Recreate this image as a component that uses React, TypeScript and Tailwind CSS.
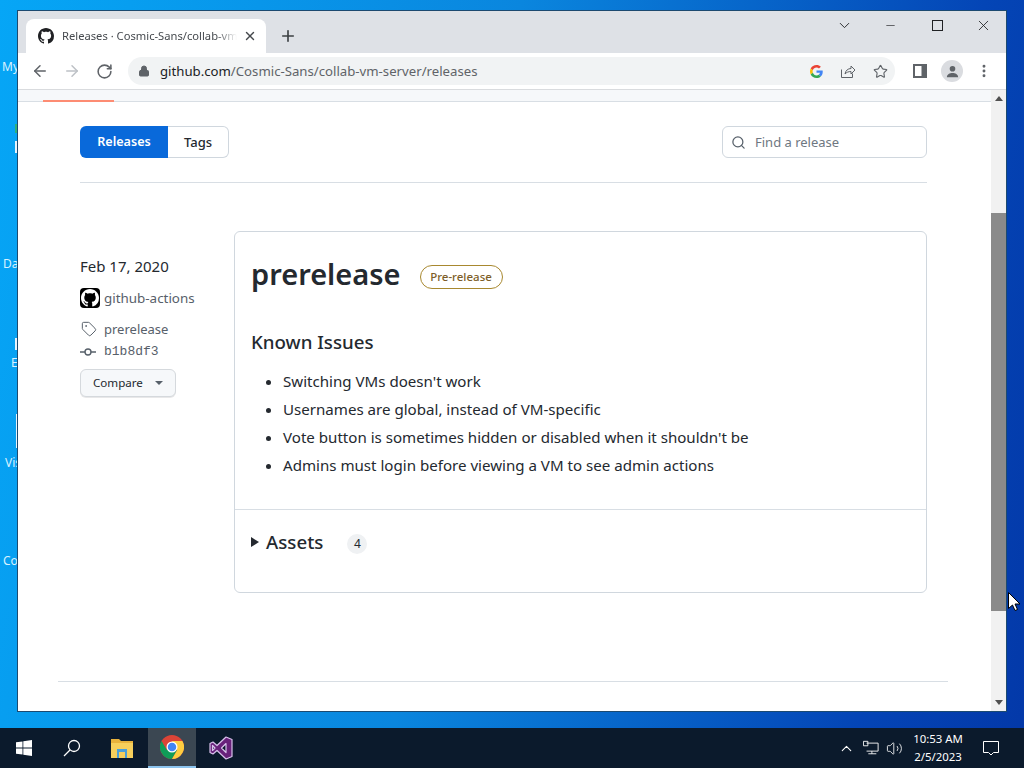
import { ArrowLeft, ArrowRight, ChevronDown, ChevronUp, Lock, MoreVertical, Plus, RotateCw, Search, Star, Tag, Volume2, X, Minus } from 'lucide-react';

const githubMark =
  'M8 0C3.58 0 0 3.58 0 8c0 3.54 2.29 6.53 5.47 7.59.4.07.55-.17.55-.38 0-.19-.01-.82-.01-1.49-2.01.37-2.53-.49-2.69-.94-.09-.23-.48-.94-.82-1.13-.28-.15-.68-.52-.01-.53.63-.01 1.08.58 1.23.82.72 1.21 1.87.87 2.33.66.07-.52.28-.87.51-1.07-1.78-.2-3.64-.89-3.64-3.95 0-.87.31-1.59.82-2.15-.08-.2-.36-1.02.08-2.12 0 0 .67-.21 2.2.82.64-.18 1.32-.27 2-.27.68 0 1.36.09 2 .27 1.53-1.04 2.2-.82 2.2-.82.44 1.1.16 1.92.08 2.12.51.56.82 1.27.82 2.15 0 3.07-1.87 3.75-3.65 3.95.29.25.54.73.54 1.48 0 1.07-.01 1.93-.01 2.2 0 .21.15.46.55.38A8.013 8.013 0 0016 8c0-4.42-3.58-8-8-8z';

function TabBar() {
  return (
    <div className="flex h-[42px] bg-[#dee1e6] text-[#202124]">
      <div className="mt-[8px] ml-[8px] flex h-[34px] w-[240px] items-center rounded-t-[8px] bg-white pl-[12px]">
        <svg viewBox="0 0 16 16" className="h-[16px] w-[16px] shrink-0" fill="#202124">
          <path d={githubMark} />
        </svg>
        <span className="ml-[8px] w-[175px] overflow-hidden text-[11.2px] whitespace-nowrap text-[#45494e] [mask-image:linear-gradient(to_right,black_88%,transparent_100%)]">
          Releases · Cosmic-Sans/collab-vm-server
        </span>
        <X size={14} strokeWidth={2.4} className="ml-[6px] shrink-0 text-[#45484c]" />
      </div>
      <Plus size={18} strokeWidth={2.2} className="mt-[16px] ml-[13px] text-[#3c4043]" />
      <div className="ml-auto flex items-start text-[#202124]">
        <ChevronDown size={17} strokeWidth={1.3} className="mt-[6px] mr-[31px]" />
        <Minus size={13} strokeWidth={1.2} className="mt-[8px] mr-[35px]" />
        <div className="mt-[9px] mr-[32px] h-[11px] w-[11px] border border-[#202124]" />
        <X size={17} strokeWidth={1.2} className="mt-[6px] mr-[14px]" />
      </div>
    </div>
  );
}

function Toolbar() {
  return (
    <div className="flex h-[37px] items-center border-b border-[#d9dbde] bg-white pl-[13px]">
      <ArrowLeft size={18} strokeWidth={2} className="text-[#5f6368]" />
      <ArrowRight size={18} strokeWidth={2} className="ml-[14px] text-[#bdc1c6]" />
      <RotateCw size={17} strokeWidth={2.2} className="ml-[15px] text-[#5f6368]" />
      <div className="ml-[15px] flex h-[28px] w-[767px] items-center rounded-full bg-[#f1f3f4] pr-[7px] pl-[10px]">
        <Lock size={12} fill="#5f6368" className="text-[#5f6368]" />
        <span className="mt-[1px] ml-[10px] text-[13.2px] text-[#5f6368]">
          <span className="text-[#202124]">github.com</span>/Cosmic-Sans/collab-vm-server/releases
        </span>
        <svg viewBox="0 0 48 48" className="ml-auto h-[13px] w-[13px]">
          <path fill="#ea4335" d="M24 9.5c3.5 0 6.7 1.2 9.2 3.6l6.9-6.9C36 2.4 30.5 0 24 0 14.6 0 6.5 5.4 2.6 13.2l8 6.2C12.5 13.6 17.8 9.5 24 9.5z" />
          <path fill="#4285f4" d="M47 24.5c0-1.6-.1-3.1-.4-4.5H24v9h12.9c-.6 3-2.2 5.5-4.7 7.2l7.700 6C44.4 38 47 31.8 47 24.5z" />
          <path fill="#fbbc05" d="M10.5 28.6c-.5-1.4-.8-3-.8-4.6s.3-3.2.8-4.6l-8-6.2C.9 16.4 0 20.1 0 24s.9 7.6 2.6 10.8l7.9-6.2z" />
          <path fill="#34a853" d="M24 48c6.5 0 11.9-2.1 15.9-5.8l-7.7-6c-2.2 1.4-4.9 2.3-8.2 2.3-6.2 0-11.5-4.2-13.4-9.8l-8 6.2C6.5 42.6 14.6 48 24 48z" />
        </svg>
        <svg viewBox="0 0 16 16" className="ml-[17px] h-[16px] w-[16px]" fill="none" stroke="#5f6368" strokeWidth="1">
          <path d="M1.5 6.5v8h11v-4" />
          <path d="M5 11c.5-3.5 3-5.5 6-5.5V3l4 4-4 4V8.5c-2.5 0-4.5.8-6 2.5z" />
        </svg>
        <Star size={15} strokeWidth={1.8} className="ml-[17px] text-[#5f6368]" />
      </div>
      <svg viewBox="0 0 14 14" className="ml-[18px] h-[14px] w-[14px]">
        <path fill="#5f6368" fillRule="evenodd" d="M0 0h14v14H0zM2 2v10h6.5V2z" />
      </svg>
      <div className="ml-[14px] flex h-[22px] w-[22px] items-center justify-center rounded-full bg-[#dadce0]">
        <svg viewBox="0 0 16 16" className="h-[15px] w-[15px]" fill="#5f6368">
          <circle cx="8" cy="5" r="3" />
          <path d="M2 14c0-3 3-4.5 6-4.5s6 1.5 6 4.5z" />
        </svg>
      </div>
      <MoreVertical size={16} strokeWidth={2.4} className="ml-[13px] text-[#5f6368]" />
    </div>
  );
}

function Sidebar() {
  return (
    <div className="w-[154px] shrink-0 pt-[24px]">
      <div className="text-[15px] leading-[22px] text-[#24292f]">Feb 17, 2020</div>
      <div className="mt-[11px] flex items-center text-[13.4px] text-[#57606a]">
        <div className="flex h-[20px] w-[20px] items-center justify-center rounded-[4px] bg-black">
          <svg viewBox="0 0 16 16" className="h-[18px] w-[18px]" fill="white">
            <path d={githubMark} />
          </svg>
        </div>
        <span className="ml-[4px]">github-actions</span>
      </div>
      <div className="mt-[11px] flex items-center text-[13px] leading-[20px] text-[#57606a]">
        <Tag size={16} strokeWidth={1.5} className="ml-[1px]" />
        <span className="ml-[7px]">prerelease</span>
      </div>
      <div className="mt-[3px] flex items-center text-[#57606a]">
        <svg viewBox="0 0 16 16" className="h-[16px] w-[16px]" fill="none" stroke="currentColor" strokeWidth="1.4">
          <circle cx="8" cy="8" r="3" />
          <path d="M0 8h5M11 8h5" />
        </svg>
        <span className="ml-[8px] font-['Liberation_Mono',monospace] text-[13px] leading-[20px]">b1b8df3</span>
      </div>
      <button className="mt-[7px] flex h-[28px] w-[96px] items-center rounded-[6px] border border-[#d5d9dd] bg-[#f6f8fa] pl-[12px] text-[11.6px] text-[#24292f] shadow-[0_1px_0_rgba(27,31,36,0.1)]">
        Compare
        <span className="ml-[12px] h-0 w-0 border-x-[4px] border-t-[4px] border-x-transparent border-t-[#57606a]" />
      </button>
    </div>
  );
}

function ReleaseCard() {
  const issues = [
    "Switching VMs doesn't work",
    'Usernames are global, instead of VM-specific',
    "Vote button is sometimes hidden or disabled when it shouldn't be",
    'Admins must login before viewing a VM to see admin actions',
  ];
  return (
    <div className="h-[362px] w-[693px] rounded-[6px] border border-[#d0d7de] bg-white">
      <div className="h-[278px] border-b border-[#d8dee4] px-[16px] pt-[18px]">
        <div className="flex items-center">
          <h1 className="text-[29px] leading-[48px] font-semibold text-[#24292f]">prerelease</h1>
          <span className="mt-[5px] ml-[19px] flex h-[24px] w-[83px] items-center justify-center rounded-full border border-[#a8882f] text-[11.5px] font-medium text-[#7d5e28]">
            Pre-release
          </span>
        </div>
        <h2 className="mt-[29px] text-[18.7px] leading-[30px] font-medium text-[#24292f]">Known Issues</h2>
        <ul className="mt-[10px] list-disc pl-[32px] text-[15.1px] leading-[28px] text-[#24292f]">
          {issues.map((item) => (
            <li key={item}>{item}</li>
          ))}
        </ul>
      </div>
      <div className="flex items-center pt-[17px] pl-[16px]">
        <span className="h-0 w-0 border-y-[5px] border-l-[8px] border-y-transparent border-l-[#24292f]" />
        <span className="ml-[7px] text-[18.7px] leading-[30px] font-medium text-[#24292f]">Assets</span>
        <span className="mt-[3px] ml-[24px] flex h-[20px] w-[20px] items-center justify-center rounded-full bg-[#eff1f3] text-[12px] text-[#24292f]">
          4
        </span>
      </div>
    </div>
  );
}

function Page() {
  return (
    <div className="flex min-h-0 flex-1">
      <div className="flex-1 overflow-hidden bg-white">
        <div className="h-[12px] border-b border-[#d8dee4] bg-[#f6f8fa] pl-[25px]">
          <div className="h-[12px] w-[71px] border-b-2 border-[#fd8c73]" />
        </div>
        <div className="pr-[64px] pl-[62px]">
          <div className="flex items-center justify-between border-b border-[#d8dee4] pt-[24px] pb-[24px]">
            <div className="flex h-[32px]">
              <div className="flex w-[88px] items-center justify-center rounded-l-[6px] bg-[#0969da] pt-[1px] text-[12.6px] font-semibold text-white">
                Releases
              </div>
              <div className="flex w-[61px] items-center justify-center rounded-r-[6px] border border-l-0 border-[#d0d7de] pt-[1px] text-[13px] font-medium text-[#24292f]">
                Tags
              </div>
            </div>
            <div className="flex h-[32px] w-[205px] items-center rounded-[6px] border border-[#d0d7de] pl-[8px] text-[13px] text-[#6e7781]">
              <Search size={15} strokeWidth={2} className="text-[#57606a]" />
              <span className="mt-[1px] ml-[9px]">Find a release</span>
            </div>
          </div>
          <div className="mt-[48px] flex">
            <Sidebar />
            <ReleaseCard />
          </div>
        </div>
        <div className="mt-[88px] mr-[43px] ml-[40px] border-t border-[#d8dee4]" />
      </div>
      <div className="relative w-[15px] shrink-0 bg-[#f1f1f1]">
        <div className="mx-auto mt-[6px] h-0 w-0 border-x-[4px] border-b-[5px] border-x-transparent border-b-[#505050]" />
        <div className="absolute top-[123px] h-[398px] w-full bg-[#8a8a8a]" />
        <div className="absolute bottom-[6px] left-[3.5px] h-0 w-0 border-x-[4px] border-t-[5px] border-x-transparent border-t-[#505050]" />
      </div>
    </div>
  );
}

function Taskbar() {
  return (
    <div className="absolute right-0 bottom-0 left-0 flex h-[40px] items-center bg-[#0b1a2c] font-['Noto_Sans',sans-serif] text-white">
      <div className="flex w-[48px] justify-center">
        <svg viewBox="0 0 16 16" className="h-[16px] w-[16px]" fill="white">
          <path d="M0 2.3 6.5 1.4v6.2H0zM7.3 1.3 16 0v7.6H7.3zM0 8.4h6.5v6.2L0 13.7zM7.3 8.4H16V16l-8.7-1.3z" />
        </svg>
      </div>
      <div className="flex w-[48px] justify-center">
        <svg viewBox="0 0 18 18" className="h-[18px] w-[18px]" fill="none" stroke="white" strokeWidth="1.3">
          <circle cx="11" cy="7" r="5.5" />
          <path d="M7 11l-6 6" />
        </svg>
      </div>
      <div className="flex w-[52px] justify-center">
        <svg viewBox="0 0 22 20" className="h-[20px] w-[22px]">
          <path fill="#e8b23c" d="M0 1h8l2 2h12v3H0z" />
          <path fill="#f6cf5c" d="M0 5h22v15H0z" />
          <path fill="#4a9fd8" d="M6 11h10v9h-2v-6H8v6H6z" />
        </svg>
      </div>
      <div className="flex h-[40px] w-[48px] items-center justify-center border-b-2 border-[#8cc4ee] bg-[#3b4752]">
        <svg viewBox="0 0 48 48" className="h-[24px] w-[24px]">
          <circle cx="24" cy="24" r="24" fill="#db4437" />
          <path fill="#0f9d58" d="M3.2 12A24 24 0 0 0 24 48L34.4 30 13.6 30z" />
          <path fill="#ffcd40" d="M24 12h20.8A24 24 0 0 1 24 48L34.4 30z" />
          <circle cx="24" cy="24" r="11" fill="white" />
          <circle cx="24" cy="24" r="8.5" fill="#4285f4" />
        </svg>
      </div>
      <div className="ml-[1px] flex w-[48px] justify-center">
        <svg viewBox="0 0 24 24" className="h-[24px] w-[24px]">
          <path fill="#68217a" stroke="#d9c2ec" strokeWidth="1.2" strokeLinejoin="round" d="M17 1l6 2.5v17L17 23l-9-8.5-4 3.5-3-1.5v-9L4 6l4 3.5zM3.5 9.5v5L6 12zM17 7.5 12.5 12l4.5 4.5z" />
        </svg>
      </div>
      <div className="ml-auto flex items-center">
        <ChevronUp size={17} strokeWidth={1.5} />
        <svg viewBox="0 0 18 16" className="ml-[8px] h-[16px] w-[16px]" fill="none" stroke="white" strokeWidth="1">
          <path d="M4 2.5h13v9H4M10 11.5v3M6 14.5h9" />
          <path d="M.5.5h5v5h-5z" />
        </svg>
        <Volume2 size={17} strokeWidth={1.2} className="ml-[7px]" />
        <div className="ml-[7px] w-[56px] text-center text-[11.4px] leading-[18px]">
          <div>10:53 AM</div>
          <div>2/5/2023</div>
        </div>
        <svg viewBox="0 0 16 16" className="mr-[25px] ml-[17px] h-[16px] w-[16px]" fill="none" stroke="white" strokeWidth="1">
          <path d="M.5 1.5h15v11h-5L8 15l-2.5-2.5h-5z" />
        </svg>
      </div>
    </div>
  );
}

export default function App() {
  const labels = [
    { text: 'My', className: 'top-[58px] left-[2px]' },
    { text: 'Da', className: 'top-[255px] left-[3px]' },
    { text: 'E', className: 'top-[354px] left-[11px]' },
    { text: 'Vis', className: 'top-[454px] left-[5px]' },
    { text: 'Co', className: 'top-[552px] left-[3px]' },
  ];
  return (
    <div className="relative h-[768px] w-[1024px] overflow-hidden bg-[linear-gradient(100deg,#06a6f6_0%,#0a86de_45%,#0445b6_85%,#0338a8_100%)]">
      {labels.map((label) => (
        <span key={label.text} className={`absolute font-['Noto_Sans',sans-serif] text-[12px] text-[#d9f2ff] ${label.className}`}>
          {label.text}
        </span>
      ))}
      {/* bits of desktop icons that stick out from behind the window */}
      <div className="absolute top-[124px] left-[15px] h-[9px] w-[2px] bg-[#2fb07a]" />
      <div className="absolute top-[141px] left-[15px] h-[12px] w-[2px] bg-[#e8f4fc]" />
      <div className="absolute top-[338px] left-[15px] h-[12px] w-[2px] bg-[#e8f4fc]" />
      <div className="absolute top-[414px] left-[16px] h-[34px] w-[1px] bg-[#e8f4fc]" />
      <div className="absolute top-[10px] left-[17px] flex h-[702px] w-[990px] flex-col border border-[#1c4a70] font-['Noto_Sans',sans-serif]">
        <TabBar />
        <Toolbar />
        <Page />
      </div>
      <Taskbar />
      <svg viewBox="0 0 12 19" className="absolute top-[592px] left-[1008px] h-[19px] w-[12px]">
        <path d="M.5.5v16l4-3.5 2.5 5.5 2.5-1-2.5-5.5h5z" fill="white" stroke="black" strokeWidth="1" />
      </svg>
    </div>
  );
}
